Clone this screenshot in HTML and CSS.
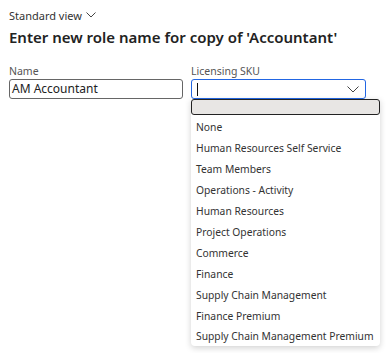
FILE: index.html
```html
<!DOCTYPE html>
<html lang="en">
<head>
    <meta charset="UTF-8">
    <title>Copy role</title>
    <link rel="stylesheet" href="styles.css">
</head>
<body>
    <div class="dialog">
        <div class="view-picker">
            Standard view
            <svg class="view-chevron" width="10" height="6" viewBox="0 0 10 6"><path d="M0.5 0.5 L5 5 L9.5 0.5" fill="none" stroke="#444" stroke-width="1"/></svg>
        </div>
        <h1 class="title">Enter new role name for copy of 'Accountant'</h1>

        <div class="fields">
            <div class="field">
                <label class="field-label">Name</label>
                <div class="input">AM Accountant</div>
            </div>
            <div class="field">
                <label class="field-label">Licensing SKU</label>
                <div class="input input-focused">
                    <span class="caret"></span>
                    <svg class="combo-chevron" width="12" height="7" viewBox="0 0 12 7"><path d="M0.5 0.5 L6 6 L11.5 0.5" fill="none" stroke="#444" stroke-width="1"/></svg>
                </div>
                <div class="dropdown">
                    <div class="option option-empty"></div>
                    <div class="option">None</div>
                    <div class="option">Human Resources Self Service</div>
                    <div class="option">Team Members</div>
                    <div class="option">Operations - Activity</div>
                    <div class="option">Human Resources</div>
                    <div class="option">Project Operations</div>
                    <div class="option">Commerce</div>
                    <div class="option">Finance</div>
                    <div class="option">Supply Chain Management</div>
                    <div class="option">Finance Premium</div>
                    <div class="option">Supply Chain Management Premium</div>
                </div>
            </div>
        </div>
    </div>
</body>
</html>
```

FILE: styles.css
```css
* {
    margin: 0;
    padding: 0;
    box-sizing: border-box;
}

html, body {
    background: #fff;
    min-height: 100%;
}

body {
    font-family: 'Noto Sans', 'Open Sans', sans-serif;
    color: #222;
}

.dialog {
    padding: 7px 9px;
    display: flex;
    flex-direction: column;
}

.view-picker {
    font-size: 11px;
    color: #333;
    display: flex;
    align-items: center;
    gap: 4px;
    height: 16px;
}

.title {
    font-size: 15px;
    font-weight: 600;
    color: #222;
    margin-top: 3px;
    line-height: 22px;
}

.fields {
    display: grid;
    grid-template-columns: 174px 189px;
    column-gap: 8px;
    margin-top: 16px;
}

.field {
    display: flex;
    flex-direction: column;
    align-items: flex-start;
}

.field-label {
    display: block;
    font-size: 10.5px;
    color: #555;
    line-height: 15px;
    height: 15px;
}

.input {
    width: 174px;
    height: 20px;
    border: 1px solid #666;
    border-radius: 3px;
    font-size: 12px;
    line-height: 18px;
    padding: 0 2px;
    color: #222;
    display: flex;
    align-items: center;
}

.input-focused {
    width: 175px;
    border-color: #2266e3;
    justify-content: space-between;
    padding: 0 6px 0 5px;
}

.caret {
    width: 1px;
    height: 13px;
    background: #111;
}

.dropdown {
    width: 189px;
    background: #fff;
    border-radius: 0 0 4px 4px;
    box-shadow: 0 2px 6px rgba(0, 0, 0, 0.18);
}

.option {
    font-size: 10.3px;
    color: #333;
    height: 21px;
    line-height: 21px;
    padding-left: 5px;
    white-space: nowrap;
}

.option:last-child {
    height: 19px;
    line-height: 19px;
}

.option-empty {
    height: 16px;
    background: #e8e6e4;
    border: 1px solid #222;
    border-radius: 3px;
    margin-bottom: 2px;
}
```
